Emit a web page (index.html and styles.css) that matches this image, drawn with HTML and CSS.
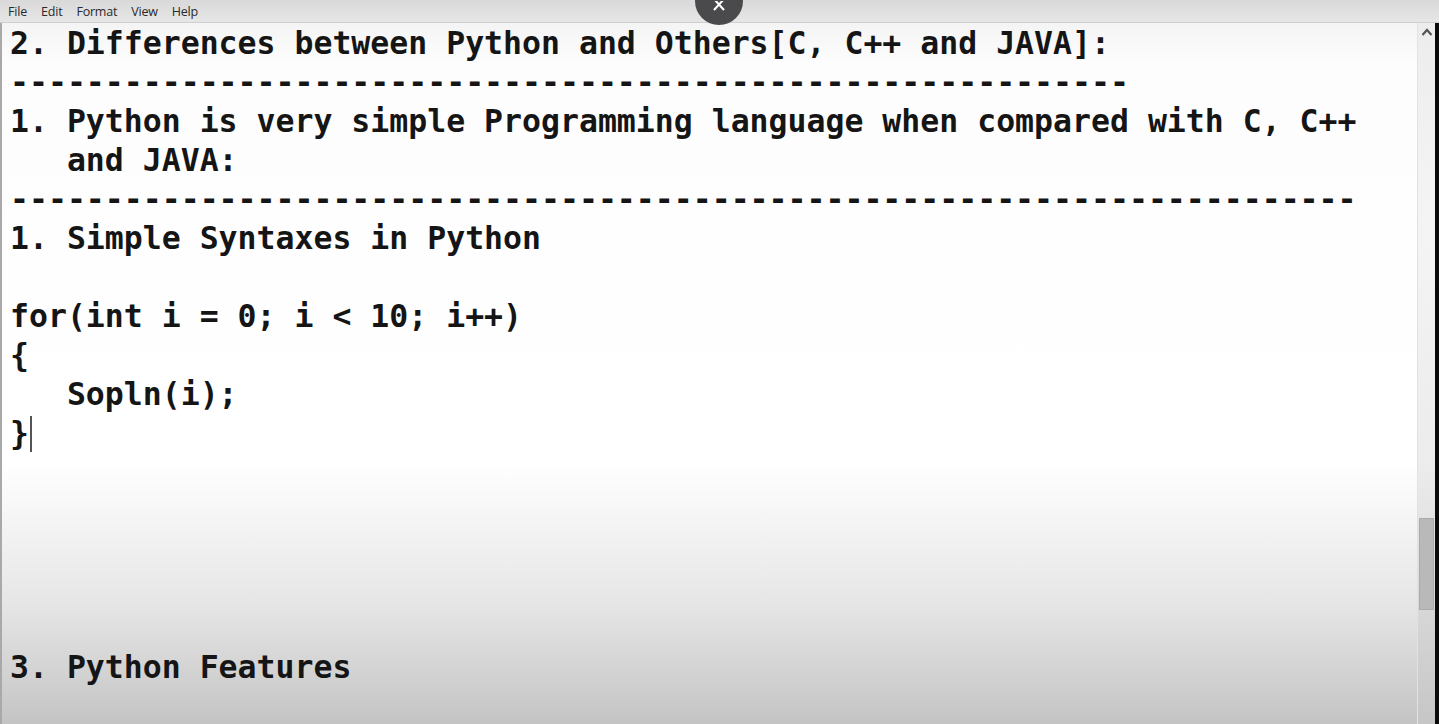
FILE: index.html
```html
<!DOCTYPE html>
<html>
<head>
<meta charset="utf-8">
<link rel="stylesheet" href="styles.css">
</head>
<body>
<div class="window">
  <div class="menubar">
    <span class="menu-item">File</span>
    <span class="menu-item">Edit</span>
    <span class="menu-item">Format</span>
    <span class="menu-item">View</span>
    <span class="menu-item">Help</span>
  </div>
  <div class="main">
    <div class="editor">
<pre class="text">2. Differences between Python and Others[C, C++ and JAVA]:
-----------------------------------------------------------
1. Python is very simple Programming language when compared with C, C++
   and JAVA:
-----------------------------------------------------------------------
1. Simple Syntaxes in Python

for(int i = 0; i &lt; 10; i++)
{
   Sopln(i);
}<span class="caret"></span>





3. Python Features</pre>
    </div>
    <div class="scrollbar">
      <div class="arrow">
        <svg width="12" height="8" viewBox="0 0 12 8"><path d="M1.5 7 L6 2 L10.5 7" fill="none" stroke="#555" stroke-width="2.2"/></svg>
      </div>
      <div class="track">
        <div class="thumb"></div>
      </div>
    </div>
    <div class="edge"></div>
  </div>
  <div class="close-btn">
    <svg width="16" height="12" viewBox="0 0 16 12"><path d="M3 -2 L13 9 M13 -2 L3 9" stroke="#fff" stroke-width="2" fill="none"/></svg>
  </div>
</div>
</body>
</html>
```
FILE: styles.css
```css
html, body {
  margin: 0;
  padding: 0;
  width: 1439px;
  height: 724px;
  overflow: hidden;
}
.window {
  position: relative;
  width: 1439px;
  height: 724px;
  display: flex;
  flex-direction: column;
  background: #e4e4e4;
}
.menubar {
  height: 22px;
  display: flex;
  align-items: center;
  padding-left: 1px;
  background: linear-gradient(#d9d9d9, #e6e6e6);
  border-bottom: 1px solid #cfcfcf;
  font-family: "Open Sans", "Noto Sans", sans-serif;
  font-size: 12.5px;
  color: #2a2a2a;
  letter-spacing: -0.2px;
}
.menu-item {
  padding: 0 7px;
}
.main {
  flex: 1;
  display: flex;
  min-height: 0;
}
.editor {
  flex: 1;
  border-left: 2px solid #a9a9a9;
  background: linear-gradient(#f4f4f4 0px, #fdfdfd 40px, #ffffff 440px, #e6e6e6 580px, #c4c4c4 701px);
  padding-left: 8px;
  padding-top: 1px;
  overflow: hidden;
}
.text {
  margin: 0;
  font-family: "DejaVu Sans Mono", monospace;
  font-weight: bold;
  font-size: 31.5px;
  line-height: 39px;
  color: #151515;
  white-space: pre;
}
.caret {
  display: inline-block;
  width: 2px;
  height: 36px;
  background: #555;
  vertical-align: -8px;
  margin-left: 1px;
}
.scrollbar {
  width: 17px;
  display: flex;
  flex-direction: column;
  background: linear-gradient(#ededed 0px, #f4f4f4 200px, #ececec 440px, #d8d8d8 580px, #c6c6c6 701px);
  border-left: 1px solid #e2e2e2;
}
.arrow {
  height: 17px;
  display: flex;
  align-items: center;
  justify-content: center;
}
.track {
  flex: 1;
  display: flex;
  flex-direction: column;
  padding-top: 478px;
}
.thumb {
  margin: 0 1px;
  height: 90px;
  background: #b9b9b9;
  border: 1px solid #ababab;
}
.edge {
  width: 4px;
  background: #0a0a0a;
}
.close-btn {
  position: absolute;
  left: 695px;
  top: -23px;
  width: 48px;
  height: 48px;
  border-radius: 50%;
  background: #4a4a4c;
  display: flex;
  align-items: flex-end;
  justify-content: center;
  padding-bottom: 12px;
  box-sizing: border-box;
}
```
